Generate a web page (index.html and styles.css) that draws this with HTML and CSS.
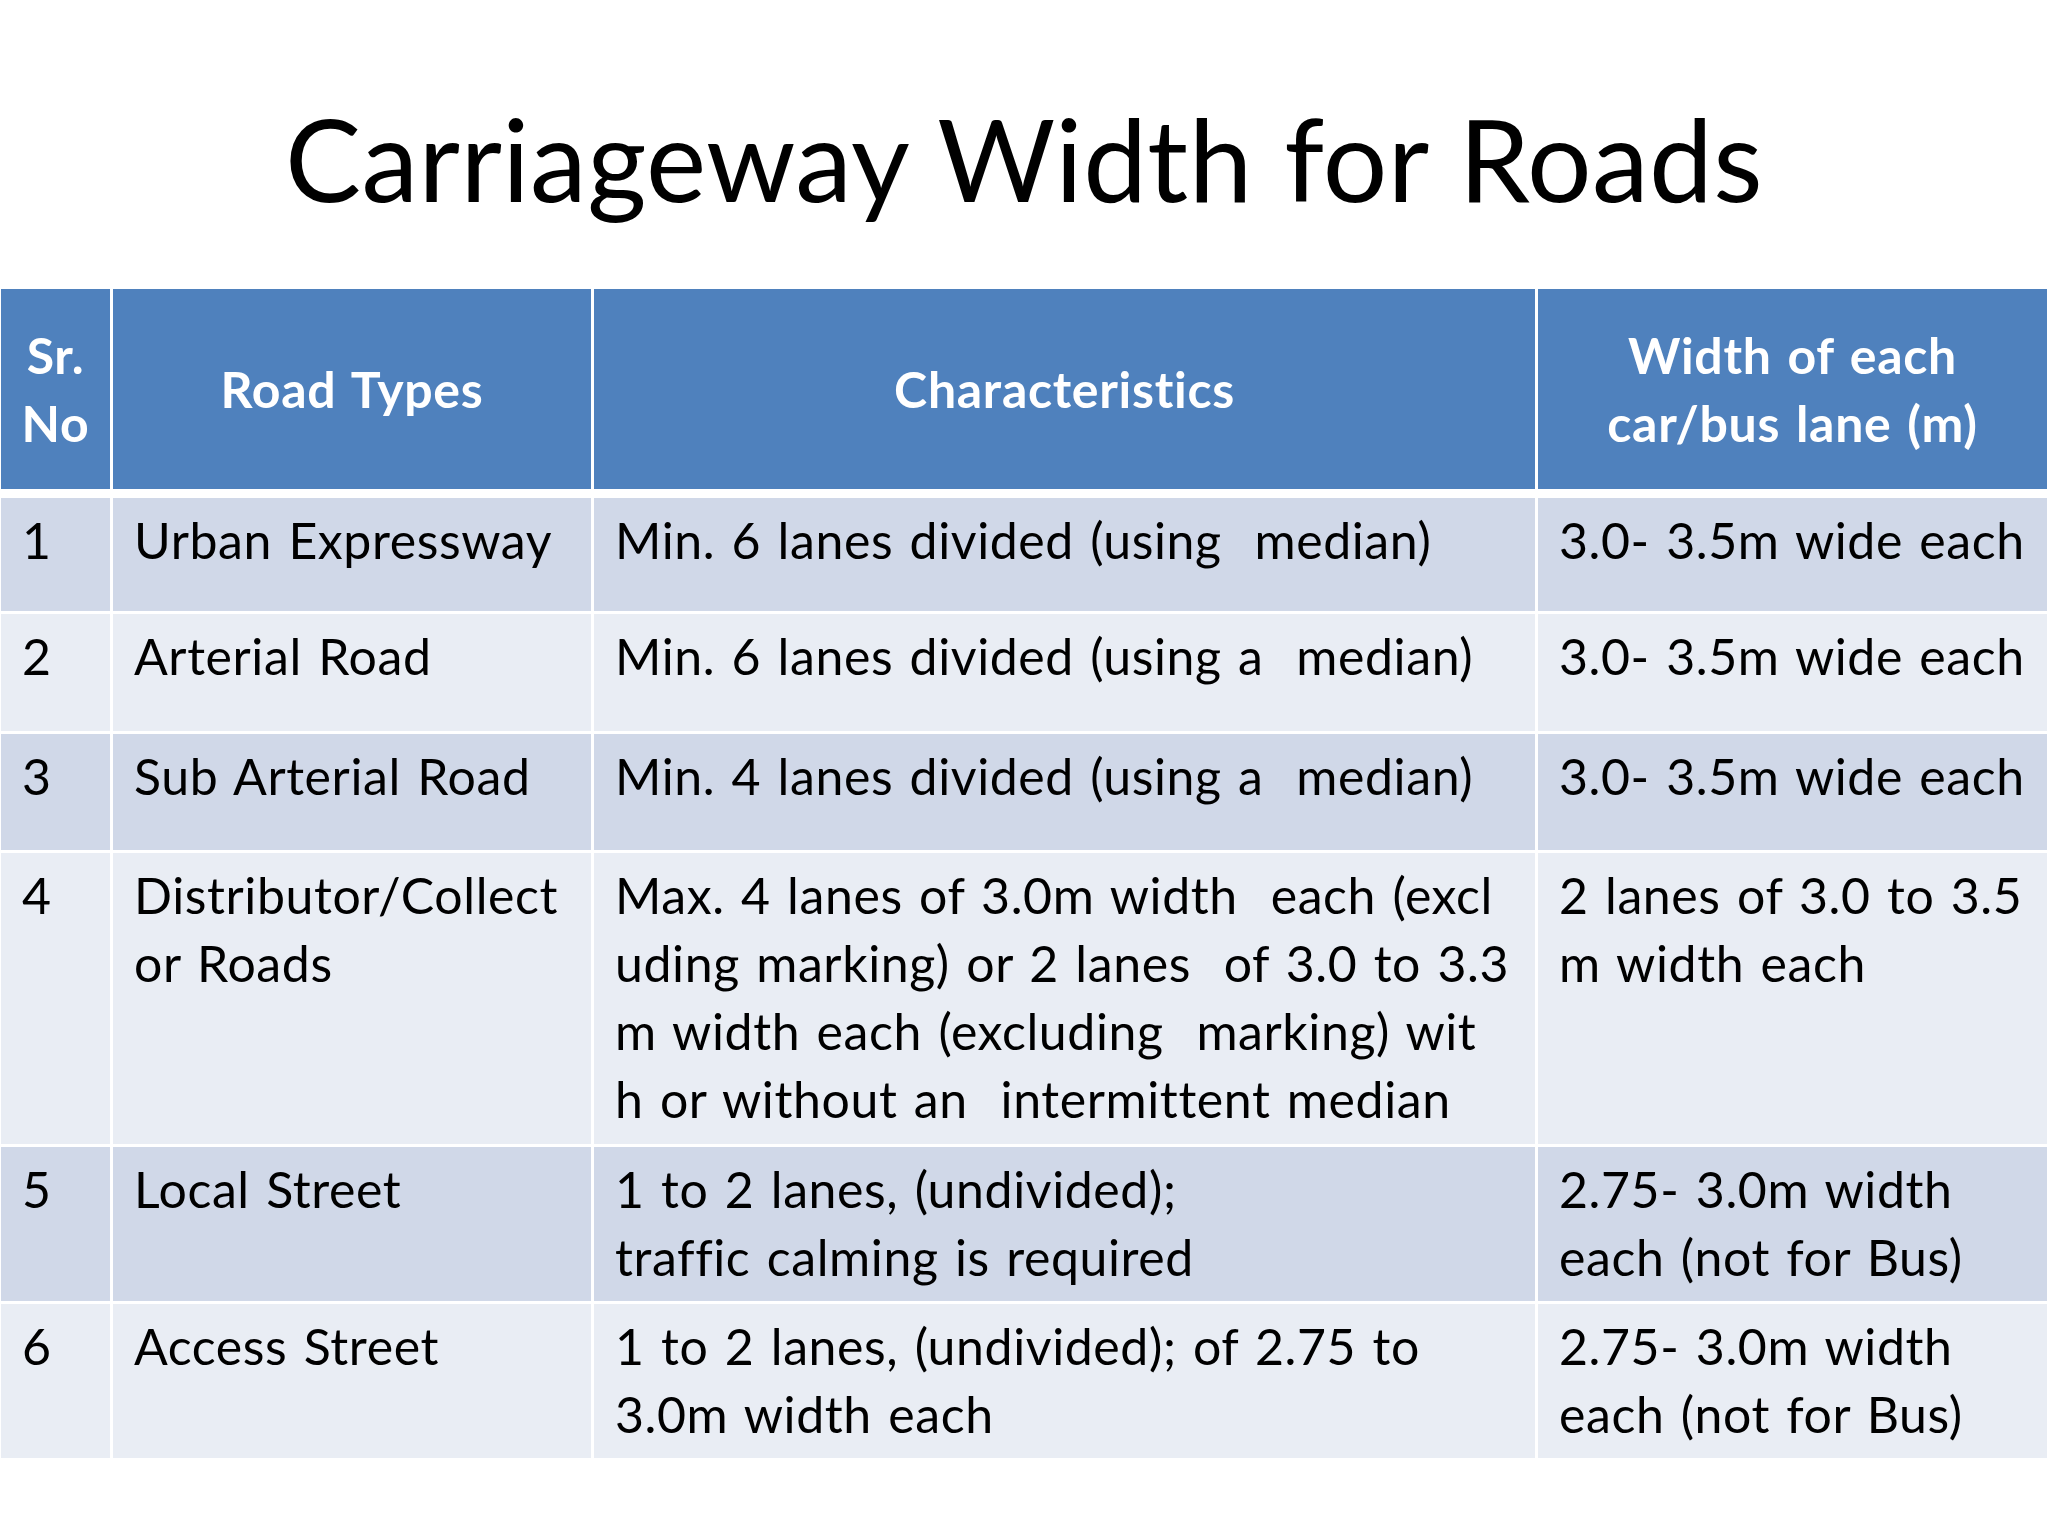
FILE: index.html
```html
<!DOCTYPE html>
<html lang="en">
<head>
<meta charset="utf-8">
<title>Carriageway Width for Roads</title>
<link rel="stylesheet" href="styles.css">
</head>
<body>
<main class="slide">
<h1 class="title">Carriageway Width for Roads</h1>
<div class="table">
<div class="th">Sr.<br>No</div>
<div class="th">Road Types</div>
<div class="th">Characteristics</div>
<div class="th">Width of each<br>car/bus lane (m)</div>

<div class="td band1 r1">1</div>
<div class="td band1 r1">Urban Expressway</div>
<div class="td band1 r1">Min. 6 lanes divided (using  median)</div>
<div class="td band1 r1">3.0- 3.5m wide each</div>

<div class="td band2 r2">2</div>
<div class="td band2 r2">Arterial Road</div>
<div class="td band2 r2">Min. 6 lanes divided (using a  median)</div>
<div class="td band2 r2">3.0- 3.5m wide each</div>

<div class="td band1 r3">3</div>
<div class="td band1 r3">Sub Arterial Road</div>
<div class="td band1 r3">Min. 4 lanes divided (using a  median)</div>
<div class="td band1 r3">3.0- 3.5m wide each</div>

<div class="td band2 r4">4</div>
<div class="td band2 r4">Distributor/Collect<br>or Roads</div>
<div class="td band2 r4">Max. 4 lanes of 3.0m width  each (excl<br>uding marking) or 2 lanes  of 3.0 to 3.3<br>m width each (excluding  marking) wit<br>h or without an  intermittent median</div>
<div class="td band2 r4">2 lanes of 3.0 to 3.5<br>m width each</div>

<div class="td band1 r5">5</div>
<div class="td band1 r5">Local Street</div>
<div class="td band1 r5">1 to 2 lanes, (undivided);<br>traffic calming is required</div>
<div class="td band1 r5">2.75- 3.0m width<br>each (not for Bus)</div>

<div class="td band2 r6">6</div>
<div class="td band2 r6">Access Street</div>
<div class="td band2 r6">1 to 2 lanes, (undivided); of 2.75 to<br>3.0m width each</div>
<div class="td band2 r6">2.75- 3.0m width<br>each (not for Bus)</div>
</div>
</main>
</body>
</html>
```
FILE: styles.css
```css
html, body {
  margin: 0;
  padding: 0;
  background: #ffffff;
}

.slide {
  width: 2048px;
  height: 1536px;
  font-family: Lato, "Open Sans", sans-serif;
  color: #000000;
  overflow: hidden;
}

.title {
  margin: 0;
  padding-top: 88px;
  height: 289px;
  box-sizing: border-box;
  text-align: center;
  font-weight: 400;
  font-size: 114px;
  line-height: 140px;
  letter-spacing: 0.4px;
  word-spacing: 2px;
}

.table {
  display: grid;
  grid-template-columns: 109px 478px 941px 509px;
  column-gap: 3px;
  row-gap: 3px;
  margin-left: 1px;
}

.th {
  height: 200px;
  margin-bottom: 6px;
  background: #4f81bd;
  color: #ffffff;
  font-weight: 700;
  font-size: 50px;
  line-height: 68px;
  letter-spacing: 0.7px;
  word-spacing: 3px;
  display: flex;
  align-items: center;
  justify-content: center;
  text-align: center;
  padding: 0 10px;
  box-sizing: border-box;
}

.td {
  box-sizing: border-box;
  padding: 8px 21px 0 21px;
  font-size: 50px;
  line-height: 68px;
  letter-spacing: 0.6px;
  word-spacing: 3px;
  white-space: pre;
}

.band1 { background: #d0d8e8; }
.band2 { background: #e9edf4; }

.r1 { height: 113px; }
.r2 { height: 117px; }
.r3 { height: 116px; }
.r4 { height: 291px; }
.r5 { height: 154px; }
.r6 { height: 154px; }
```
